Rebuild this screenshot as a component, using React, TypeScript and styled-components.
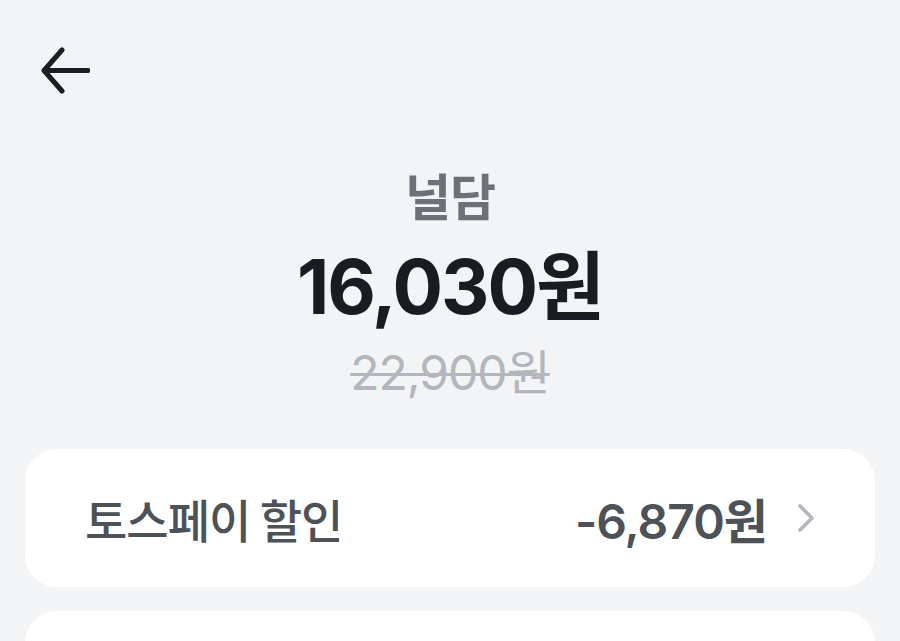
import React from "react";
import styled, { createGlobalStyle } from "styled-components";

const GlobalStyle = createGlobalStyle`
  html, body {
    margin: 0;
    padding: 0;
    background: #f3f4f6;
  }
  body {
    font-family: "Inter", "Noto Sans CJK KR", "Noto Sans", sans-serif;
    -webkit-font-smoothing: antialiased;
  }
`;

const Page = styled.div`
  width: 900px;
  height: 641px;
  overflow: hidden;
  background: #f3f4f6;
  display: flex;
  flex-direction: column;
  & > * {
    flex-shrink: 0;
  }
`;

const Header = styled.header`
  height: 140px;
  display: flex;
  align-items: flex-start;
  padding: 46px 0 0 38px;
  box-sizing: border-box;
`;

const BackButton = styled.button`
  width: 56px;
  height: 50px;
  padding: 0;
  border: none;
  background: transparent;
  display: flex;
  align-items: center;
  justify-content: flex-start;
  cursor: pointer;
`;

const Hero = styled.section`
  margin-top: 24px;
  display: flex;
  flex-direction: column;
  align-items: center;
`;

const Title = styled.div`
  font-family: "Noto Sans CJK KR", sans-serif;
  font-size: 50px;
  line-height: 60px;
  font-weight: 600;
  color: #6c7077;
  letter-spacing: -1px;
`;

const Price = styled.div`
  margin-top: 18px;
  font-size: 75px;
  line-height: 90px;
  font-weight: 700;
  color: #191c21;
  letter-spacing: -2px;
`;

const Original = styled.div`
  margin-top: 11px;
  font-size: 48px;
  line-height: 60px;
  font-weight: 400;
  color: #b3b7bd;
  text-decoration: line-through;
  text-decoration-thickness: 3px;
  letter-spacing: -1px;
`;

const List = styled.div`
  margin-top: 46px;
  padding: 0 25px;
  display: flex;
  flex-direction: column;
  gap: 24px;
`;

const Card = styled.div`
  height: 138px;
  flex-shrink: 0;
  background: #ffffff;
  border-radius: 32px;
  display: flex;
  align-items: center;
  padding: 0 60px 0 60px;
  box-sizing: border-box;
`;

const RowLabel = styled.span`
  flex: 1;
  font-family: "Noto Sans CJK KR", sans-serif;
  font-size: 46px;
  font-weight: 500;
  color: #4d5259;
  letter-spacing: -1px;
`;

const RowValue = styled.span`
  font-size: 48px;
  font-weight: 600;
  color: #4d5259;
  letter-spacing: -1px;
  margin-right: 30px;
`;

const Chevron = styled.svg`
  display: block;
`;

export default function App() {
  return (
    <>
      <GlobalStyle />
      <Page>
        <Header>
          <BackButton aria-label="뒤로">
            <svg width="52" height="50" viewBox="0 0 52 50" fill="none">
              <path
                d="M6 24.5 H50 M24 4 L6 24.5 L24 45"
                stroke="#1c1e22"
                strokeWidth="5"
                strokeLinecap="round"
                strokeLinejoin="round"
              />
            </svg>
          </BackButton>
        </Header>
        <Hero>
          <Title>널담</Title>
          <Price>16,030원</Price>
          <Original>22,900원</Original>
        </Hero>
        <List>
          <Card>
            <RowLabel>토스페이 할인</RowLabel>
            <RowValue>-6,870원</RowValue>
            <Chevron width="18" height="30" viewBox="0 0 18 30" fill="none">
              <path
                d="M3 3 L15 15 L3 27"
                stroke="#b3b7bd"
                strokeWidth="3.6"
                strokeLinecap="round"
                strokeLinejoin="round"
              />
            </Chevron>
          </Card>
          <Card />
        </List>
      </Page>
    </>
  );
}
